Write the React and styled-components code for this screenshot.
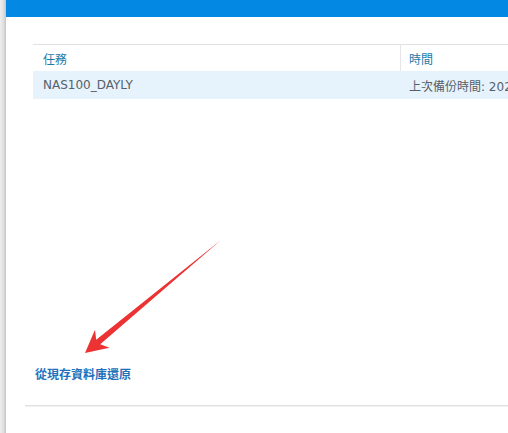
import React from "react";
import styled, { createGlobalStyle } from "styled-components";

const GlobalStyle = createGlobalStyle`
  html, body {
    margin: 0;
    padding: 0;
    background: #ffffff;
  }
  body {
    font-family: "DejaVu Sans", "Noto Sans CJK TC", sans-serif;
  }
`;

const Frame = styled.div`
  display: flex;
  width: 508px;
  height: 433px;
  overflow: hidden;
  background: #ffffff;
`;

const LeftEdge = styled.div`
  width: 6px;
  flex: none;
  background: linear-gradient(to right, #eeeeee, #dedede 60%, #c4c4c4);
`;

const Main = styled.div`
  position: relative;
  flex: 1;
  display: flex;
  flex-direction: column;
  overflow: hidden;
`;

const TitleBar = styled.div`
  height: 17px;
  flex: none;
  background: #0388e4;
`;

const TableWrap = styled.div`
  margin: 27px 0 0 27px;
  width: 620px;
  border-top: 1px solid #e2e2e2;
`;

const Row = styled.div`
  display: grid;
  grid-template-columns: 367px 1fr;
  height: ${(p) => p.$h}px;
  background: ${(p) => (p.$selected ? "#e7f3fc" : "#ffffff")};
`;

const Cell = styled.div`
  display: flex;
  align-items: center;
  padding-left: ${(p) => (p.$first ? 10 : 8)}px;
  border-left: ${(p) => (p.$first ? "none" : `1px solid ${p.$head ? "#e6e6e6" : "transparent"}`)};
  font-family: "DejaVu Sans", "Noto Sans CJK TC", sans-serif;
  font-size: 12px;
  color: ${(p) => (p.$head ? "#1b7ba9" : "#55606a")};
  white-space: nowrap;
`;

const RestoreLink = styled.a`
  margin: 267px 0 0 29px;
  font-family: "Noto Sans CJK TC", sans-serif;
  font-size: 12px;
  line-height: 16px;
  font-weight: 700;
  color: #1f70bb;
  text-decoration: none;
  cursor: pointer;
  align-self: flex-start;
`;

const Separator = styled.div`
  margin: 23px 0 0 19px;
  height: 1px;
  background: #e0e0e0;
  box-shadow: 0 1px 0 #f2f2f2;
`;

const ArrowLayer = styled.svg`
  position: absolute;
  left: -6px;
  top: 0;
  width: 508px;
  height: 433px;
  pointer-events: none;
`;

const Arrow = () => (
  <ArrowLayer viewBox="0 0 508 433">
    <polygon
      points="85,353 109.5,347.8 100.2,344.2 221,240 96.2,339.8 95,329.8"
      fill="#ec3232"
    />
  </ArrowLayer>
);

export default function App() {
  return (
    <>
      <GlobalStyle />
      <Frame>
        <LeftEdge />
        <Main>
          <TitleBar />
          <TableWrap>
            <Row $h={26}>
              <Cell $first $head>任務</Cell>
              <Cell $head>時間</Cell>
            </Row>
            <Row $h={28} $selected>
              <Cell $first>NAS100_DAYLY</Cell>
              <Cell>上次備份時間: 2021/06/15 03:00</Cell>
            </Row>
          </TableWrap>
          <RestoreLink>從現存資料庫還原</RestoreLink>
          <Separator />
          <Arrow />
        </Main>
      </Frame>
    </>
  );
}
